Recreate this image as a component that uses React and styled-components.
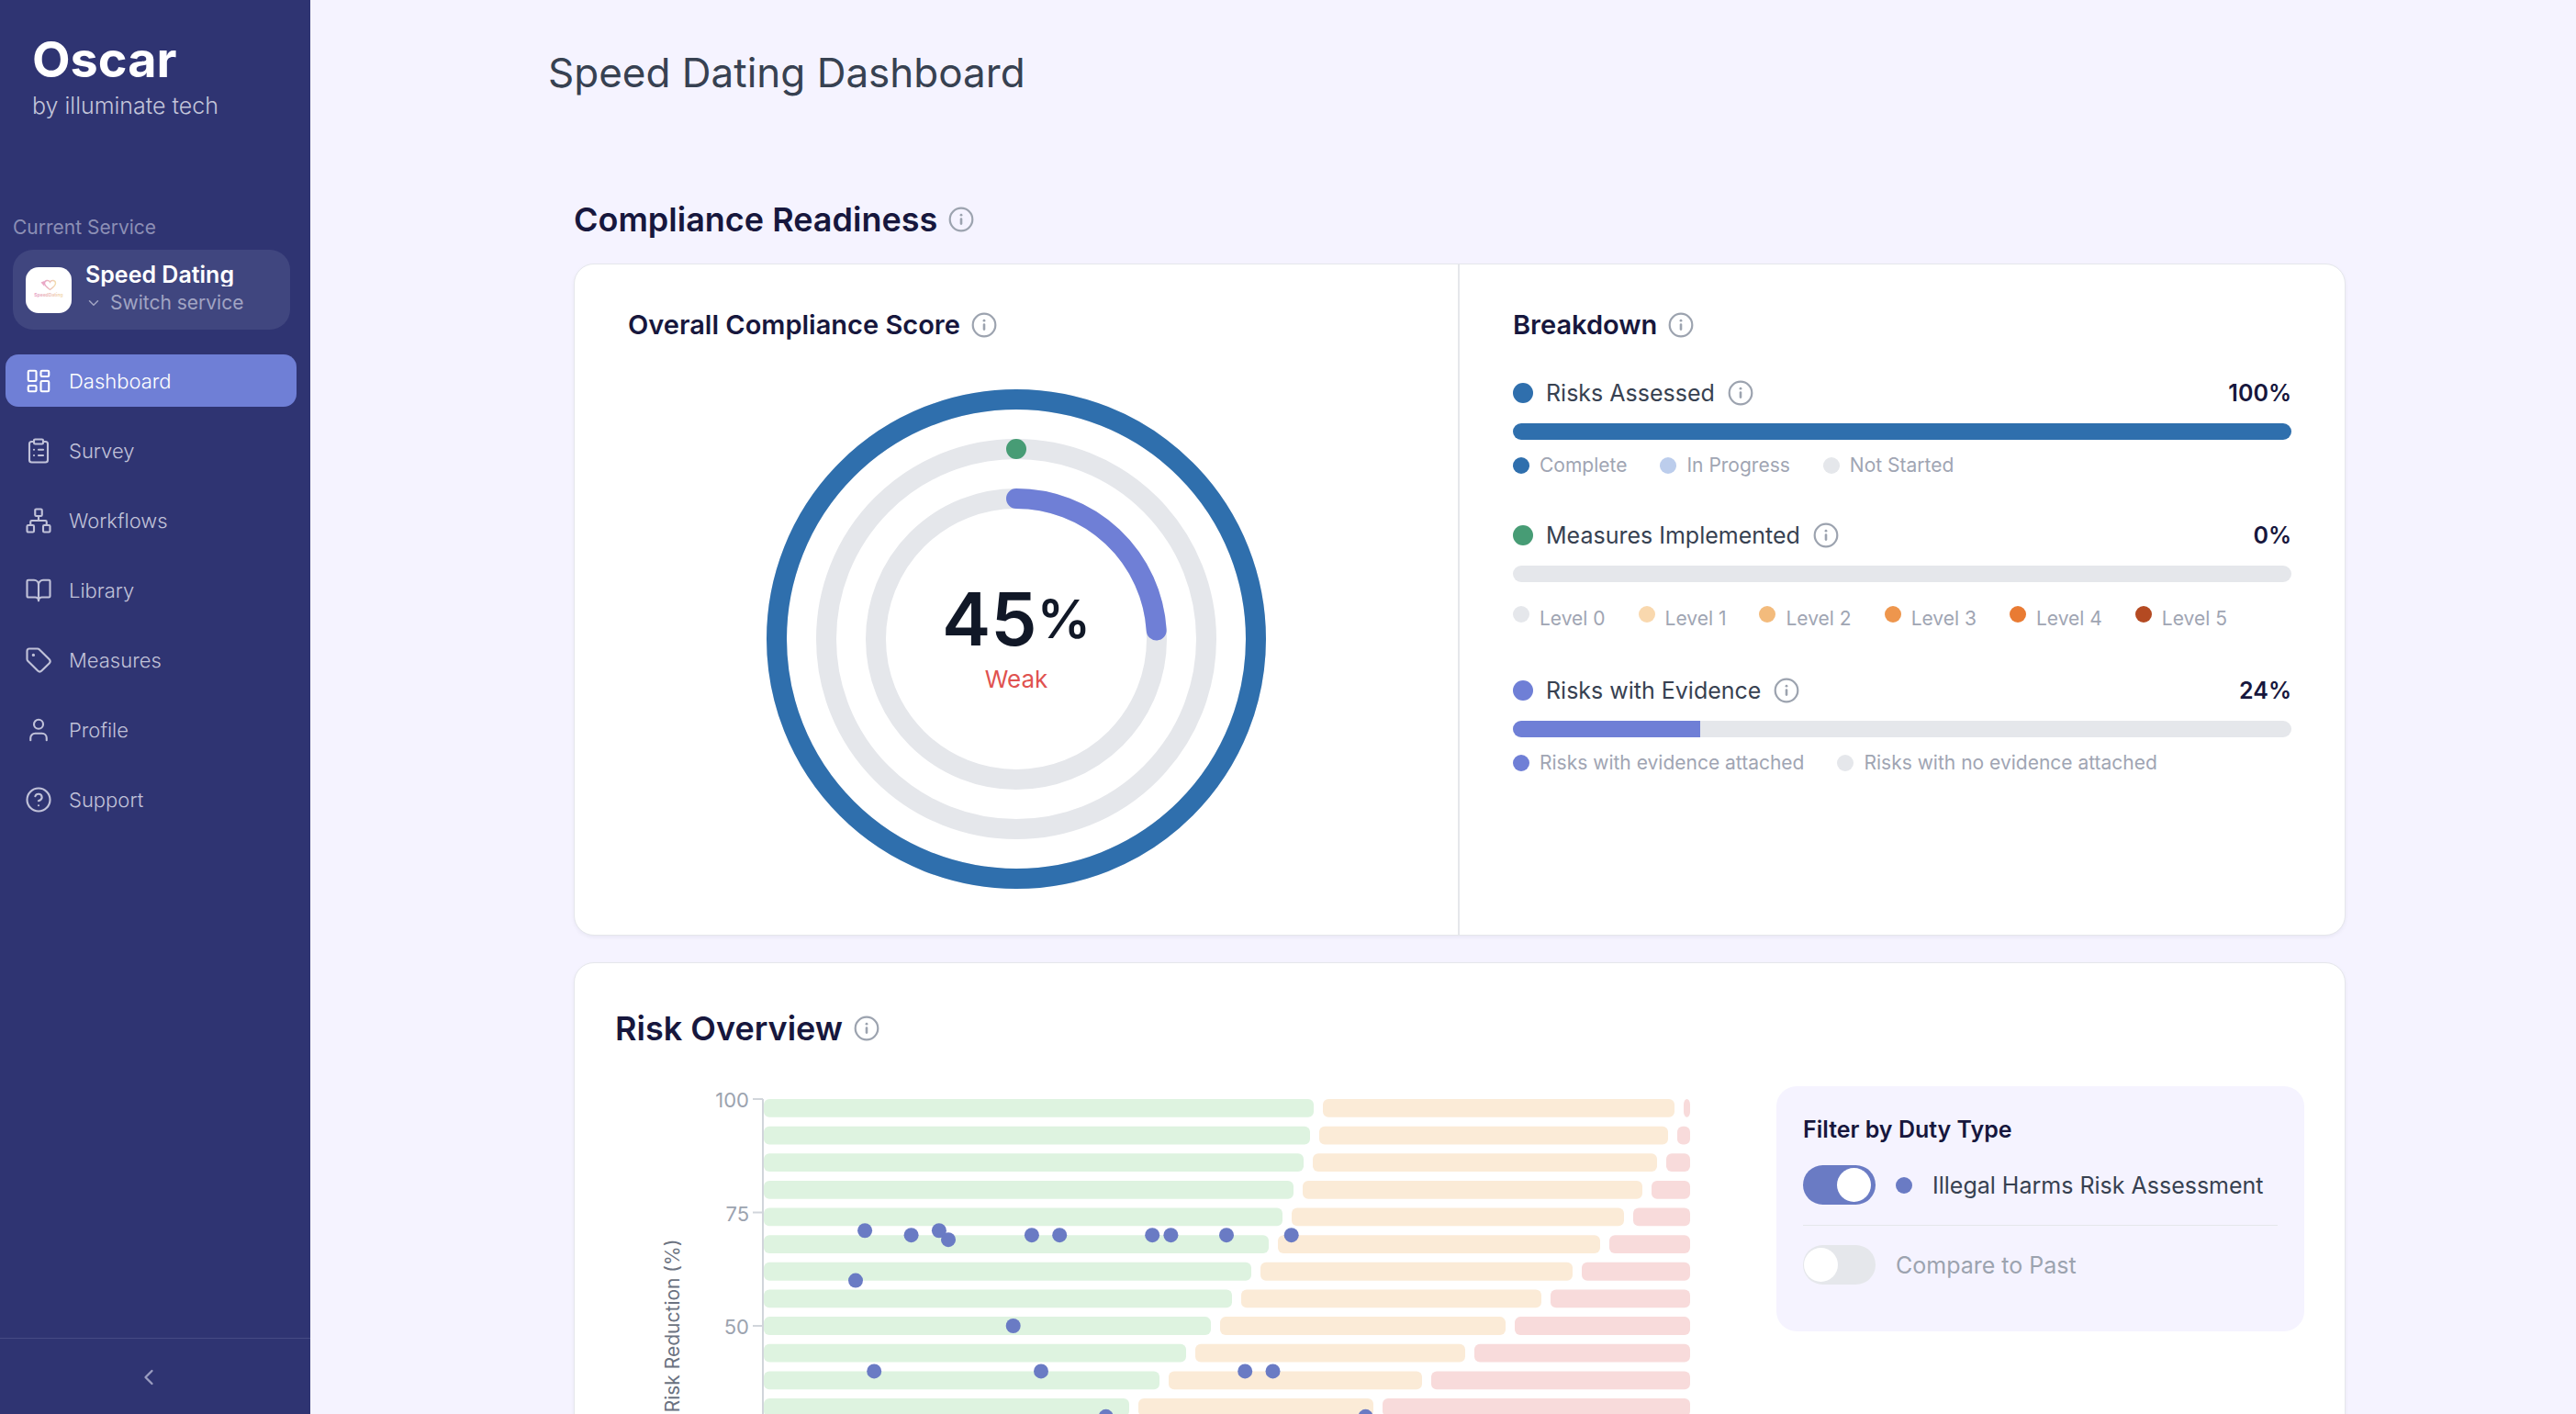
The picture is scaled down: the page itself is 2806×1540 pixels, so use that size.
import React, {useState} from 'react';

import styled, {createGlobalStyle, css} from 'styled-components';
import {
  LayoutDashboard,
  ClipboardList,
  Network,
  BookOpen,
  Tag,
  User,
  CircleHelp,
  ChevronDown,
  ChevronLeft,
} from 'lucide-react';

const GlobalStyle = createGlobalStyle`
  * {
    box-sizing: border-box;
  }

  body {
    margin: 0;
    font-family: Inter, "Liberation Sans", sans-serif;
    background-color: #f5f3ff;
  }

  h1, h2, h3, p, ul {
    margin: 0;
    padding: 0;
    font-weight: inherit;
  }

  button {
    font-family: inherit;
    border: none;
    cursor: pointer;
  }
`;

const StyledPage = styled.div`
  display: flex;
  height: 100vh;
`;

const StyledSidebar = styled.aside`
  display: flex;
  flex-direction: column;
  flex: 0 0 338px;
  padding-top: 32px;
  background-color: #2f3472;
  color: #ffffff;
`;

const StyledBrand = styled.div`
  padding-left: 35px;
`;

const StyledBrandName = styled.div`
  font-size: 54px;
  line-height: 65px;
  font-weight: 700;
`;

const StyledBrandTagline = styled.div`
  font-size: 25px;
  line-height: 36px;
  font-weight: 300;
  color: #c3c5da;
`;

const StyledService = styled.div`
  display: flex;
  flex-direction: column;
  gap: 10px;
  margin: 101px 22px 27px 14px;
`;

const StyledServiceLabel = styled.div`
  font-size: 21px;
  line-height: 28px;
  color: #8c8fb5;
`;

const StyledServiceButton = styled.button`
  display: flex;
  align-items: center;
  gap: 15px;
  padding: 15px 14px;
  border-radius: 22px;
  background-color: #40467f;
  color: #ffffff;
  text-align: left;
`;

const StyledServiceLogo = styled.svg`
  width: 50px;
  height: 50px;
  border-radius: 14px;
  background-color: #ffffff;
`;

const StyledServiceText = styled.div`
  display: flex;
  flex-direction: column;
  gap: 4px;
`;

const StyledServiceName = styled.div`
  font-size: 25px;
  line-height: 25px;
  font-weight: 600;
  overflow: hidden;
`;

const StyledServiceSwitch = styled.div`
  display: flex;
  align-items: center;
  gap: 9px;
  font-size: 21px;
  line-height: 28px;
  color: #a1a4c3;
`;

const StyledNav = styled.nav`
  display: flex;
  flex-direction: column;
  flex: 1;
  gap: 19px;
  padding: 0 15px 0 6px;
`;

const StyledNavLink = styled.a`
  display: flex;
  align-items: center;
  gap: 18px;
  height: 57px;
  padding-left: 21px;
  border-radius: 14px;
  font-size: 22px;
  font-weight: 300;
  text-decoration: none;
  color: #c1c2d9;

  ${({$active}) => $active && css`
    background-color: #6f7fd6;
    color: #ffffff;
  `}
`;

const StyledCollapse = styled.button`
  display: flex;
  align-items: center;
  justify-content: center;
  height: 83px;
  padding: 2px 15px 0 0;
  border-top: 1px solid #464b83;
  background-color: transparent;
  color: #9a9dc0;
`;

const StyledMain = styled.main`
  flex: 1;
  min-width: 0;
  padding: 51px 0 0 36px;
  overflow-y: auto;
  scrollbar-width: none;
`;

const StyledContainer = styled.div`
  max-width: 1986px;
  margin: 0 auto;
`;

const StyledPageTitle = styled.h1`
  margin-bottom: 110px;
  font-size: 44px;
  line-height: 56px;
  color: #374151;
`;

const StyledContent = styled.div`
  padding: 0 28px;
`;

const StyledHeading = styled.h2`
  display: flex;
  align-items: center;
  gap: 12px;
  font-size: 36px;
  line-height: 44px;
  font-weight: 600;
  color: #17173d;
`;

const StyledSubheading = styled.h3`
  display: flex;
  align-items: center;
  gap: 12px;
  font-size: 29px;
  line-height: 36px;
  font-weight: 600;
  color: #17173d;
`;

const StyledInfoButton = styled.button`
  display: flex;
  padding: 0;
  background-color: transparent;
  color: #9ca3af;
`;

const StyledCard = styled.section`
  border: 1px solid #e5e7eb;
  border-radius: 22px;
  background-color: #ffffff;
  box-shadow: 0 2px 4px rgba(20, 20, 60, 0.05);
`;

const StyledScoreCard = styled(StyledCard)`
  display: grid;
  grid-template-columns: 1fr 1fr;
  margin: 26px 0 29px;
`;

const StyledPanel = styled.div`
  padding: 48px 58px 50px;

  &:first-child {
    border-right: 2px solid #e5e7eb;
  }
`;

const StyledGauge = styled.div`
  display: grid;
  justify-items: center;
  align-items: center;
  margin-top: 52px;

  & > * {
    grid-area: 1 / 1;
  }
`;

const StyledGaugeText = styled.div`
  display: flex;
  flex-direction: column;
  align-items: center;
  padding-bottom: 8px;
  color: #111827;
`;

const StyledScore = styled.div`
  display: flex;
  align-items: center;
  font-size: 80px;
  line-height: 96px;
  font-weight: 600;
`;

const StyledScoreUnit = styled.span`
  font-size: 58px;
`;

const StyledScoreRating = styled.div`
  font-size: 26px;
  line-height: 36px;
  color: #e0524f;
`;

const StyledMetric = styled.div`
  margin-top: ${({$first}) => ($first ? '38px' : '44px')};
`;

const StyledMetricHeader = styled.div`
  display: flex;
  align-items: center;
  gap: 14px;
  font-size: 25px;
  line-height: 36px;
  color: #374151;
`;

const StyledMetricValue = styled.span`
  margin-left: auto;
  font-weight: 600;
  color: #17173d;
`;

const StyledDot = styled.span`
  flex: none;
  width: ${({$size}) => $size}px;
  height: ${({$size}) => $size}px;
  border-radius: 50%;
  background-color: ${({$color}) => $color};
`;

const StyledTrack = styled.div`
  height: 18px;
  margin-top: 15px;
  border-radius: 9px;
  background-color: #e5e7eb;
  overflow: hidden;
`;

const StyledFill = styled.div`
  height: 100%;
  background-color: ${({$color}) => $color};
`;

const StyledLegend = styled.ul`
  display: flex;
  flex-wrap: wrap;
  gap: 0 36px;
  margin-top: 14px;
  padding: ${({$spaced}) => ($spaced ? '12px 0 2px' : '0')};
  list-style: none;
`;

const StyledLegendItem = styled.li`
  display: flex;
  align-items: ${({$top}) => ($top ? 'flex-start' : 'center')};
  gap: 11px;
  font-size: 21px;
  line-height: 28px;
  color: #a0a5b3;
`;

const StyledRiskCard = styled(StyledCard)`
  padding: 49px 44px;
`;

const StyledRiskBody = styled.div`
  display: grid;
  grid-template-columns: minmax(0, 1fr) 575px;
  align-items: start;
  gap: 94px;
  margin-top: 41px;
`;

const StyledPlot = styled.svg`
  display: block;
  width: 100%;
  font-size: 22px;
`;

const StyledAxisTitle = styled.text`
  font-size: 21px;
  fill: #6b7280;
`;

const StyledFilter = styled.div`
  padding: 31px 29px 51px;
  border-radius: 22px;
  background-color: #f5f3ff;
`;

const StyledFilterTitle = styled.h3`
  margin-bottom: 23px;
  font-size: 25px;
  line-height: 32px;
  font-weight: 600;
  color: #17173d;
`;

const StyledFilterRow = styled.label`
  display: flex;
  align-items: center;
  gap: 22px;
  font-size: 25px;
  line-height: 32px;
  color: ${({$muted}) => ($muted ? '#9ca3af' : '#374151')};

  & + & {
    margin-top: 22px;
    padding-top: 21px;
    border-top: 1px solid #e5e7eb;
  }
`;

const StyledSwitch = styled.input`
  appearance: none;
  display: flex;
  flex: none;
  width: 79px;
  height: 43px;
  margin: 0;
  padding: 3px 1px;
  border-radius: 22px;
  background-color: #e5e7eb;
  cursor: pointer;

  &::before {
    content: "";
    width: 37px;
    height: 37px;
    border-radius: 50%;
    background-color: #ffffff;
  }

  &:checked {
    justify-content: flex-end;
    padding-right: 5px;
    background-color: #6a7bc4;
  }
`;

const navItems = [
  {label: 'Dashboard', icon: LayoutDashboard},
  {label: 'Survey', icon: ClipboardList},
  {label: 'Workflows', icon: Network},
  {label: 'Library', icon: BookOpen},
  {label: 'Measures', icon: Tag},
  {label: 'Profile', icon: User},
  {label: 'Support', icon: CircleHelp},
];

const metrics = [
  {
    name: 'Risks Assessed',
    value: 100,
    color: '#2f6fad',
    legend: [
      ['Complete', '#2f6fad'],
      ['In Progress', '#bccdec'],
      ['Not Started', '#e5e7eb'],
    ],
  },
  {
    name: 'Measures Implemented',
    value: 0,
    color: '#479c75',
    levels: true,
    legend: [
      ['Level 0', '#e5e7eb'],
      ['Level 1', '#f9d8ae'],
      ['Level 2', '#f3bb7c'],
      ['Level 3', '#ee964d'],
      ['Level 4', '#e97b33'],
      ['Level 5', '#b44a22'],
    ],
  },
  {
    name: 'Risks with Evidence',
    value: 24,
    color: '#6f7fd6',
    legend: [
      ['Risks with evidence attached', '#6f7fd6'],
      ['Risks with no evidence attached', '#e5e7eb'],
    ],
  },
];

// x where the green and the amber band of each row end, top row first
const bands = [
  [761, 1154],
  [757, 1147],
  [750, 1135],
  [739, 1119],
  [727, 1099],
  [712, 1073],
  [693, 1043],
  [672, 1009],
  [649, 970],
  [622, 926],
  [593, 879],
  [560, 826],
];

// [inherent risk, risk reduction]
const risks = [
  [11, 71], [16, 70], [19, 71], [20, 69], [29, 70], [32, 70], [42, 70],
  [44, 70], [50, 70], [57, 70], [10, 60], [27, 50], [12, 40], [30, 40],
  [52, 40], [55, 40], [37, 30], [65, 30],
];

const InfoButton = ({topic}) => (
  <StyledInfoButton type="button" aria-label={`About ${topic}`}>
    <svg width="28" height="28" viewBox="0 0 28 28" fill="none">
      <circle cx="14" cy="14" r="12.3" stroke="currentColor" strokeWidth="2.2" />
      <circle cx="14" cy="9.2" r="1.4" fill="currentColor" />
      <path d="M14 13.600v5" stroke="currentColor" strokeWidth="2.6" strokeLinecap="round" />
    </svg>
  </StyledInfoButton>
);

const ServiceLogo = () => (
  <StyledServiceLogo viewBox="0 0 50 50" aria-hidden="true">
    <defs>
      <linearGradient id="brand" x1="0" x2="1" y1="0" y2="0">
        <stop offset="0" stopColor="#e6a3c6" />
        <stop offset="1" stopColor="#f2dcae" />
      </linearGradient>
    </defs>
    <path
      d="M26.500 24.500c-3-2.200-6-4.300-6-7 0-3.400 4.500-4.200 6-1.200 1.500-3 6-2.200 6 1.200 0 2.700-3 4.800-6 7z"
      fill="none"
      stroke="url(#brand)"
      strokeWidth="1.400"
    />
    <path d="M16.500 16.500l3.800-1.500v6z" fill="#eaa9c6" />
    <text x="25" y="32" textAnchor="middle" fontSize="5" fontWeight="700" fill="url(#brand)">
      SpeedDating
    </text>
  </StyledServiceLogo>
);

const Sidebar = () => {
  const [active, setActive] = useState('Dashboard');

  return (
    <StyledSidebar>
      <StyledBrand>
        <StyledBrandName>Oscar</StyledBrandName>
        <StyledBrandTagline>by illuminate tech</StyledBrandTagline>
      </StyledBrand>
      <StyledService>
        <StyledServiceLabel>Current Service</StyledServiceLabel>
        <StyledServiceButton type="button">
          <ServiceLogo />
          <StyledServiceText>
            <StyledServiceName>Speed Dating</StyledServiceName>
            <StyledServiceSwitch>
              <ChevronDown size={18} strokeWidth={2} />
              Switch service
            </StyledServiceSwitch>
          </StyledServiceText>
        </StyledServiceButton>
      </StyledService>
      <StyledNav>
        {navItems.map(({label, icon: Icon}) => (
          <StyledNavLink
            key={label}
            href={`#${label.toLowerCase()}`}
            $active={label === active}
            onClick={() => setActive(label)}
          >
            <Icon size={30} strokeWidth={1.7} />
            {label}
          </StyledNavLink>
        ))}
      </StyledNav>
      <StyledCollapse type="button" aria-label="Collapse sidebar">
        <ChevronLeft size={28} strokeWidth={2} />
      </StyledCollapse>
    </StyledSidebar>
  );
};

const Ring = ({radius, value, color}) => {
  const length = 2 * Math.PI * radius;
  return (
    <g fill="none" strokeWidth="22" transform="rotate(-90 272 272)">
      <circle cx="272" cy="272" r={radius} stroke="#e5e7eb" />
      <circle
        cx="272"
        cy="272"
        r={radius}
        stroke={color}
        strokeLinecap="round"
        strokeDasharray={`${Math.max(length * value / 100, 0.01)} ${length}`}
      />
    </g>
  );
};

const Gauge = () => (
  <StyledGauge>
    <svg width="544" height="544" viewBox="0 0 544 544" aria-hidden="true">
      {metrics.map(({name, value, color}, i) => (
        <Ring key={name} radius={261 - i * 54} value={value} color={color} />
      ))}
    </svg>
    <StyledGaugeText>
      <StyledScore>
        45<StyledScoreUnit>%</StyledScoreUnit>
      </StyledScore>
      <StyledScoreRating>Weak</StyledScoreRating>
    </StyledGaugeText>
  </StyledGauge>
);

const Metric = ({metric, first}) => {
  const {name, value, color, legend, levels} = metric;
  return (
    <StyledMetric $first={first}>
      <StyledMetricHeader>
        <StyledDot $size={22} $color={color} />
        {name}
        <InfoButton topic={name} />
        <StyledMetricValue>{value}%</StyledMetricValue>
      </StyledMetricHeader>
      <StyledTrack>
        <StyledFill $color={color} style={{width: `${value}%`}} />
      </StyledTrack>
      <StyledLegend $spaced={levels}>
        {legend.map(([label, dot]) => (
          <StyledLegendItem key={label} $top={levels}>
            <StyledDot $size={18} $color={dot} />
            {label}
          </StyledLegendItem>
        ))}
      </StyledLegend>
    </StyledMetric>
  );
};

const RiskPlot = () => {
  const left = 161;
  const right = 1171;
  const top = 14;
  const height = 494;
  const x = (v) => left + v * (right - left) / 100;
  const y = (v) => top + (100 - v) * height / 100;

  return (
    <StyledPlot viewBox="0 0 1171 524" role="img" aria-label="Risk overview chart">
      {bands.map(([green, amber], i) => {
        const row = {y: top + i * 29.64, height: 19.8, rx: 6};
        return (
          <g key={green}>
            <rect {...row} x={left + 1} width={green - left - 1} fill="#def3e0" />
            <rect {...row} x={green + 10} width={amber - green - 10} fill="#fbebd7" />
            <rect {...row} x={amber + 10} width={right - amber - 10} fill="#f8dbdb" />
          </g>
        );
      })}
      <path d={`M${left} ${top}V${top + height}`} stroke="#d1d5db" strokeWidth="2" />
      {[100, 75, 50].map((tick) => (
        <g key={tick}>
          <path d={`M${left - 11} ${y(tick)}H${left}`} stroke="#d1d5db" strokeWidth="2" />
          <text x={left - 15} y={y(tick) + 9} textAnchor="end" fill="#9ca3af">{tick}</text>
        </g>
      ))}
      <StyledAxisTitle
        transform={`translate(70 ${y(50)}) rotate(-90)`}
        textAnchor="middle"
      >
        Risk Reduction (%)
      </StyledAxisTitle>
      {risks.map(([risk, reduction]) => (
        <circle
          key={`${risk}-${reduction}`}
          cx={x(risk)}
          cy={y(reduction)}
          r="8"
          fill="#6a7bc4"
        />
      ))}
    </StyledPlot>
  );
};

const Filter = () => {
  const [harms, setHarms] = useState(true);
  const [past, setPast] = useState(false);

  return (
    <StyledFilter>
      <StyledFilterTitle>Filter by Duty Type</StyledFilterTitle>
      <StyledFilterRow>
        <StyledSwitch
          type="checkbox"
          role="switch"
          checked={harms}
          onChange={() => setHarms(!harms)}
        />
        <StyledDot $size={18} $color="#6a7bc4" />
        Illegal Harms Risk Assessment
      </StyledFilterRow>
      <StyledFilterRow $muted>
        <StyledSwitch
          type="checkbox"
          role="switch"
          checked={past}
          onChange={() => setPast(!past)}
        />
        Compare to Past
      </StyledFilterRow>
    </StyledFilter>
  );
};

const App = () => (
  <StyledPage>
    <GlobalStyle />
    <Sidebar />
    <StyledMain>
      <StyledContainer>
        <StyledPageTitle>Speed Dating Dashboard</StyledPageTitle>
        <StyledContent>
          <StyledHeading>
            Compliance Readiness
            <InfoButton topic="Compliance Readiness" />
          </StyledHeading>
          <StyledScoreCard>
            <StyledPanel>
              <StyledSubheading>
                Overall Compliance Score
                <InfoButton topic="Overall Compliance Score" />
              </StyledSubheading>
              <Gauge />
            </StyledPanel>
            <StyledPanel>
              <StyledSubheading>
                Breakdown
                <InfoButton topic="Breakdown" />
              </StyledSubheading>
              {metrics.map((metric, i) => (
                <Metric key={metric.name} metric={metric} first={i === 0} />
              ))}
            </StyledPanel>
          </StyledScoreCard>
          <StyledRiskCard>
            <StyledHeading>
              Risk Overview
              <InfoButton topic="Risk Overview" />
            </StyledHeading>
            <StyledRiskBody>
              <RiskPlot />
              <Filter />
            </StyledRiskBody>
          </StyledRiskCard>
        </StyledContent>
      </StyledContainer>
    </StyledMain>
  </StyledPage>
);

export default App;
